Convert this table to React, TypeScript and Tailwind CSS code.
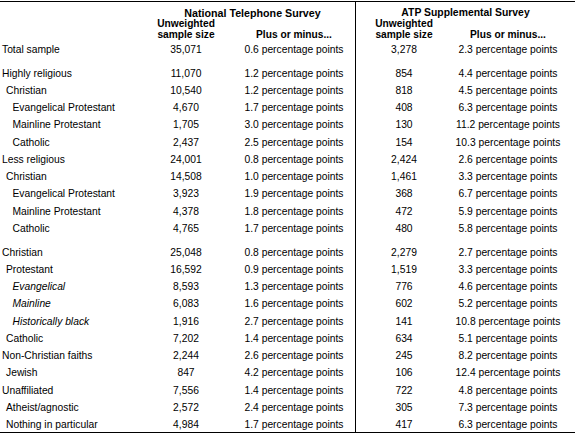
import React from "react";

type Row = {
  label: string;
  level: 0 | 1 | 2;
  italic?: boolean;
  nts: [string, string];
  atp: [string, string];
};

const groups: Row[][] = [
  [{ label: "Total sample", level: 0, nts: ["35,071", "0.6"], atp: ["3,278", "2.3"] }],
  [
    { label: "Highly religious", level: 0, nts: ["11,070", "1.2"], atp: ["854", "4.4"] },
    { label: "Christian", level: 1, nts: ["10,540", "1.2"], atp: ["818", "4.5"] },
    { label: "Evangelical Protestant", level: 2, nts: ["4,670", "1.7"], atp: ["408", "6.3"] },
    { label: "Mainline Protestant", level: 2, nts: ["1,705", "3.0"], atp: ["130", "11.2"] },
    { label: "Catholic", level: 2, nts: ["2,437", "2.5"], atp: ["154", "10.3"] },
    { label: "Less religious", level: 0, nts: ["24,001", "0.8"], atp: ["2,424", "2.6"] },
    { label: "Christian", level: 1, nts: ["14,508", "1.0"], atp: ["1,461", "3.3"] },
    { label: "Evangelical Protestant", level: 2, nts: ["3,923", "1.9"], atp: ["368", "6.7"] },
    { label: "Mainline Protestant", level: 2, nts: ["4,378", "1.8"], atp: ["472", "5.9"] },
    { label: "Catholic", level: 2, nts: ["4,765", "1.7"], atp: ["480", "5.8"] },
  ],
  [
    { label: "Christian", level: 0, nts: ["25,048", "0.8"], atp: ["2,279", "2.7"] },
    { label: "Protestant", level: 1, nts: ["16,592", "0.9"], atp: ["1,519", "3.3"] },
    { label: "Evangelical", level: 2, italic: true, nts: ["8,593", "1.3"], atp: ["776", "4.6"] },
    { label: "Mainline", level: 2, italic: true, nts: ["6,083", "1.6"], atp: ["602", "5.2"] },
    { label: "Historically black", level: 2, italic: true, nts: ["1,916", "2.7"], atp: ["141", "10.8"] },
    { label: "Catholic", level: 1, nts: ["7,202", "1.4"], atp: ["634", "5.1"] },
    { label: "Non-Christian faiths", level: 0, nts: ["2,244", "2.6"], atp: ["245", "8.2"] },
    { label: "Jewish", level: 1, nts: ["847", "4.2"], atp: ["106", "12.4"] },
    { label: "Unaffiliated", level: 0, nts: ["7,556", "1.4"], atp: ["722", "4.8"] },
    { label: "Atheist/agnostic", level: 1, nts: ["2,572", "2.4"], atp: ["305", "7.3"] },
    { label: "Nothing in particular", level: 1, nts: ["4,984", "1.7"], atp: ["417", "6.3"] },
  ],
];

const indent = ["pl-[2px]", "pl-[6px]", "pl-[12.5px]"];
const groupGap = ["mt-[1px]", "mt-[6px]", "mt-[6.5px]"];

export default function App() {
  return (
    <div
      className="w-[575px] h-[435px] bg-white pt-px text-black"
      style={{ fontFamily: '"Liberation Sans", Arial, sans-serif' }}
    >
      <div className="flex h-[432px] border-t border-b border-black">
        {/* labels + National Telephone Survey */}
        <div className="w-[356px] shrink-0 border-r border-black">
          <div className="grid grid-cols-[150px_1fr]">
            <div />
            <div>
              <div className="pt-[5px] text-center font-bold text-[10.7px] leading-[12px]">
                National Telephone Survey
              </div>
              <div className="grid grid-cols-[72px_1fr] font-bold text-[10.2px] leading-[10.7px]">
                <div className="text-center">
                  Unweighted
                  <br />
                  sample size
                </div>
                <div className="text-center self-end pl-[11px]">Plus or minus...</div>
              </div>
            </div>
          </div>
          {groups.map((g, gi) => (
            <div key={gi} className={groupGap[gi]}>
              {g.map((r, i) => (
                <div
                  key={i}
                  className="grid grid-cols-[150px_72px_1fr] h-[17.25px] leading-[17.25px] text-[10.3px]"
                >
                  <div className={`${indent[r.level]} whitespace-nowrap ${r.italic ? "italic" : ""}`}>
                    {r.label}
                  </div>
                  <div className="text-center">{r.nts[0]}</div>
                  <div className="text-center pl-[11px] whitespace-nowrap">{r.nts[1]} percentage points</div>
                </div>
              ))}
            </div>
          ))}
        </div>

        {/* ATP Supplemental Survey */}
        <div className="flex-1">
          <div className="pt-[5px] text-center font-bold text-[10.4px] leading-[12px]">
            ATP Supplemental Survey
          </div>
          <div className="grid grid-cols-[96px_112px] font-bold text-[10.2px] leading-[10.7px]">
            <div className="text-center">
              Unweighted
              <br />
              sample size
            </div>
            <div className="text-center self-end">Plus or minus...</div>
          </div>
          {groups.map((g, gi) => (
            <div key={gi} className={groupGap[gi]}>
              {g.map((r, i) => (
                <div
                  key={i}
                  className="grid grid-cols-[96px_112px] h-[17.25px] leading-[17.25px] text-[10.3px]"
                >
                  <div className="text-center">{r.atp[0]}</div>
                  <div className="text-center whitespace-nowrap">{r.atp[1]} percentage points</div>
                </div>
              ))}
            </div>
          ))}
        </div>
      </div>
    </div>
  );
}
